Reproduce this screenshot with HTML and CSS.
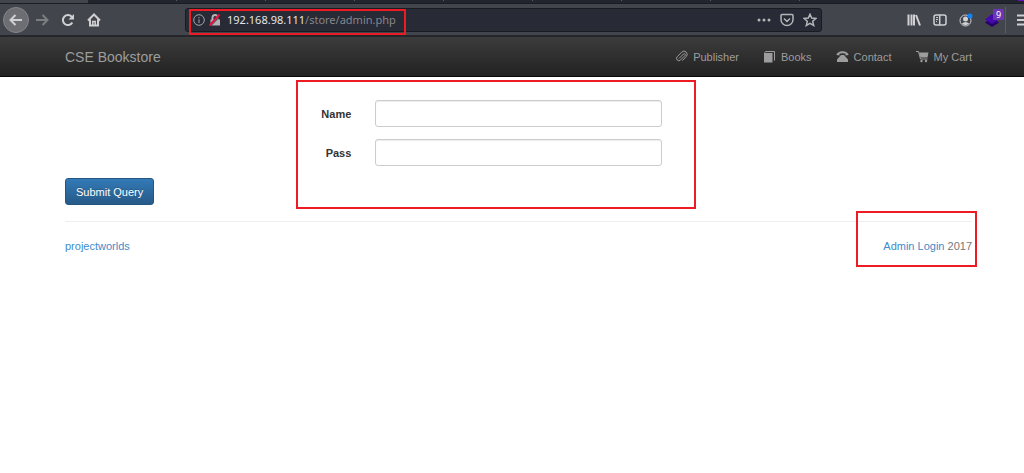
FILE: index.html
```html
<!DOCTYPE html>
<html lang="en">
    <head>
        <meta charset="UTF-8" />
        <meta name="viewport" content="width=device-width, initial-scale=1.0" />
        <title>CSE Bookstore</title>
        <link rel="stylesheet" href="styles.css">
    </head>
    <body>
        <!-- Browser chrome -->
        <div class="tab-strip">
            <div class="tab-active"></div>
            <div class="tab"></div>
            <div class="tab"></div>
            <div class="tab"></div>
            <div class="tab"></div>
            <div class="tab"></div>
            <div class="tab"></div>
            <div class="tab"></div>
            <div class="tab"></div>
            <div class="tab-account"></div>
        </div>
        <div class="toolbar">
            <div class="nav-buttons">
                <button type="button" class="tool back" aria-label="Back">
                    <svg width="14" height="14" viewBox="0 0 14 14"><path d="M13 7H2M6.500 2L1.500 7l5 5" /></svg>
                </button>
                <button type="button" class="tool forward" aria-label="Forward">
                    <svg width="14" height="14" viewBox="0 0 14 14"><path d="M1 7h11M7.500 2l5 5-5 5" /></svg>
                </button>
                <button type="button" class="tool" aria-label="Reload">
                    <svg width="14" height="14" viewBox="0 0 14 14"><path d="M11.300 9.500A5 5 0 1 1 11 4.200" /><path class="solid" d="M13 1v5.500H7.500z" /></svg>
                </button>
                <button type="button" class="tool" aria-label="Home">
                    <svg width="14" height="14" viewBox="0 0 14 14"><path d="M1 7.500L7 1.500l6 6M3 6.500V12.500h8V6.500" /><path class="frame" d="M5.800 12V8.500h2.400V12" /></svg>
                </button>
            </div>
            <div class="url-bar">
                <svg class="url-info" width="12" height="12" viewBox="0 0 12 12"><circle cx="6" cy="6" r="5.300" /><path d="M6 5.300V9M6 3v1.200" /></svg>
                <svg class="url-lock" width="12" height="12" viewBox="0 0 12 12"><path class="shackle" d="M3.500 6V3.500a2.500 2.500 0 0 1 5 0V6" /><path class="lock-body" d="M1.500 5.500h9.500v6H1.500z" /><path class="slash-gap" d="M1.500 12L12 1.500" /><path class="slash" d="M.5 11.500L10.500.5" /></svg>
                <span class="url"><span class="host">192.168.98.111</span>/store/admin.php</span>
                <svg class="url-action" width="14" height="14" viewBox="0 0 14 14"><g class="solid"><circle cx="2" cy="7" r="1.500" /><circle cx="7" cy="7" r="1.500" /><circle cx="12" cy="7" r="1.500" /></g></svg>
                <svg class="url-action" width="14" height="14" viewBox="0 0 14 14"><path d="M2 1.500h10a1 1 0 0 1 1 1V6.500a6 6 0 0 1-12 0V2.500a1 1 0 0 1 1-1zM4 5.500l3 3 3-3" /></svg>
                <svg class="url-action" width="14" height="14" viewBox="0 0 14 14"><path d="M7 1.200l1.700 3.900 4.200.4-3.200 2.800 1 4.200L7 10.300l-3.700 2.200 1-4.200L1.100 5.500l4.200-.4z" /></svg>
                <div class="mark mark-url"></div>
            </div>
            <div class="extensions">
                <button type="button" class="tool" aria-label="Library">
                    <svg width="14" height="14" viewBox="0 0 14 14"><path d="M1.500 1.500v11M4.500 1.500v11M7 1.500v11M9 2l4 10.500" /></svg>
                </button>
                <button type="button" class="tool" aria-label="Sidebars">
                    <svg width="14" height="14" viewBox="0 0 14 14"><rect class="frame" x="1" y="2" width="12" height="10" rx="2" /><path class="frame" d="M6.700 2v10" /><path class="thin" d="M3 4.500h2M3 6.500h2M3 8.500h1" /></svg>
                </button>
                <button type="button" class="tool" aria-label="Account">
                    <svg width="14" height="14" viewBox="0 0 14 14"><circle class="thin" cx="6.500" cy="7.500" r="5.500" /><circle class="solid" cx="6.500" cy="6" r="2.500" /><path class="solid" d="M2.800 10.500q3.700-3 7.400 0-3.700 3.500-7.400 0z" /><circle class="dot" cx="11" cy="3" r="2.500" /></svg>
                </button>
                <button type="button" class="tool wappalyzer" aria-label="Wappalyzer">
                    <svg width="14" height="14" viewBox="0 0 14 14"><path class="layer-low" d="M7 4.500l7 5L7 14 0 9.500z" /><path class="layer-top" d="M7 1l7 5.500L7 11 0 6.500z" /></svg>
                    <span class="badge">9</span>
                </button>
                <button type="button" class="tool menu" aria-label="Menu">
                    <svg width="14" height="14" viewBox="0 0 14 14"><path d="M1 2.500h12M1 7h12M1 11.500h12" /></svg>
                </button>
            </div>
        </div>

        <nav class="navbar">
            <a class="brand" href="#">CSE Bookstore</a>
            <ul class="nav-links">
                <li>
                    <a href="#">
                        <svg width="13" height="13" viewBox="0 0 13 13"><path class="clip" d="M4 8.500l4.500-4.500a1 1 0 0 1 1.500 1.500L5.500 10a2.200 2.200 0 0 1-3.300-3.300l4.500-4.500a3 3 0 0 1 4.600 4.300L7.500 10.500" /></svg>
                        Publisher
                    </a>
                </li>
                <li>
                    <a href="#">
                        <svg width="13" height="13" viewBox="0 0 13 13"><path d="M1 3h8.500v9.500H1z" /><path class="edge" d="M1.500 2.500L3 1.500h8.500v9" /></svg>
                        Books
                    </a>
                </li>
                <li>
                    <a href="#">
                        <svg width="13" height="13" viewBox="0 0 13 13"><path d="M.5 5C.5 3 3 1.200 6.500 1.200S12.500 3 12.500 5L9.500 5.500V3.700Q6.500 3 3.500 3.700v1.800zM5 5h3l4 4.500v2.500H1V9.500z" /></svg>
                        Contact
                    </a>
                </li>
                <li>
                    <a href="#">
                        <svg width="13" height="13" viewBox="0 0 13 13"><path d="M3 2.500h9.500L11.500 7.500H4.500z" /><path class="edge" d="M0 1.500h2.500L4.500 9h7" /><circle cx="5.500" cy="11" r="1.200" /><circle cx="10" cy="11" r="1.200" /></svg>
                        My Cart
                    </a>
                </li>
            </ul>
        </nav>

        <main class="container">
            <form class="login-form">
                <div class="form-group">
                    <label for="name">Name</label>
                    <input type="text" id="name" name="name" />
                </div>
                <div class="form-group">
                    <label for="pass">Pass</label>
                    <input type="password" id="pass" name="pass" />
                </div>
                <button type="submit" class="btn-primary">Submit Query</button>
                <div class="mark mark-form"></div>
            </form>
            <footer class="footer">
                <a href="#">projectworlds</a>
                <div class="admin">
                    <a href="#">Admin Login</a> 2017
                    <div class="mark mark-admin"></div>
                </div>
            </footer>
        </main>
    </body>
</html>
```
FILE: styles.css
```css
* {
    box-sizing: border-box;
}
body {
    min-height: 100vh;
    margin: 0;
    background: #fff;
    color: #333;
    font-family: "Liberation Sans", Arial, sans-serif;
    font-size: 11px;
    line-height: 16px;
}
a {
    color: #428bca;
    text-decoration: none;
}
svg {
    display: block;
    flex: none;
}

/* Browser chrome */
.tab-strip {
    display: flex;
    height: 4px;
    background: #23252e;
    border-bottom: 1px solid #1b1d24;
    overflow: hidden;
}
.tab-active {
    flex: none;
    width: 88px;
    height: 4px;
    background: #42454c;
}
.tab {
    flex: none;
    width: 89px;
    height: 1px;
    border-right: 1px solid #555860;
}
.tab-account {
    flex: none;
    width: 8px;
    height: 1px;
    margin-left: 218px;
    background: #6a11b8;
}
.toolbar {
    display: flex;
    align-items: center;
    height: 33px;
    background: #42454c;
    border-bottom: 2px solid #24262b;
    overflow: hidden;
}
.nav-buttons {
    display: flex;
    flex: none;
    width: 185px;
    padding-left: 3px;
}
.tool {
    display: flex;
    align-items: center;
    justify-content: center;
    flex: none;
    width: 26px;
    height: 26px;
    padding: 0;
    border: 0;
    background: none;
    color: #d0d0d2;
}
.tool svg,
.url-action {
    fill: none;
    stroke: currentColor;
    stroke-width: 2;
}
.tool .solid,
.url-action .solid {
    fill: currentColor;
    stroke: none;
}
.tool .frame {
    stroke-width: 1.5;
}
.tool .thin {
    stroke-width: 1;
}
.back {
    border: 1px solid #858689;
    border-radius: 50%;
    background: #6c6e73;
}
.forward {
    color: #7b7d81;
}
.url-bar {
    position: relative;
    display: flex;
    align-items: center;
    flex: 1;
    gap: 8px;
    height: 24px;
    padding: 0 4px 0 7px;
    border: 1px solid #191b22;
    border-radius: 3px;
    background: #282a35;
}
.url-info {
    fill: none;
    stroke: #a5a6aa;
}
.url-lock {
    margin-left: -4px;
    fill: none;
}
.shackle {
    stroke: #b2b3b6;
    stroke-width: 2;
}
.lock-body {
    fill: #b2b3b6;
}
.slash-gap {
    stroke: #282a35;
}
.slash {
    stroke: #e2123f;
    stroke-width: 2;
}
.url {
    flex: 1;
    margin-left: -2px;
    color: #85868b;
    font-family: "Noto Sans", sans-serif;
}
.host {
    color: #e6e6e8;
}
.url-action {
    margin-left: 1px;
    color: #b4b5b9;
    stroke-width: 1.5;
}
.extensions {
    display: flex;
    flex: none;
    width: 202px;
    padding-left: 79px;
}
.dot {
    fill: #0a84ff;
    stroke: none;
}
.wappalyzer {
    position: relative;
}
.wappalyzer svg {
    stroke: none;
}
.layer-low {
    fill: #25006b;
}
.layer-top {
    fill: #4608ad;
}
.badge {
    position: absolute;
    top: 2px;
    right: 1px;
    width: 11px;
    height: 11px;
    border-radius: 1px;
    background: #6b35b5;
    color: #fff;
    font: 9px/11px "Noto Sans", sans-serif;
    text-align: center;
}
.menu {
    border-left: 1px solid #5b5d63;
    padding-left: 8px;
}

/* Site header */
.navbar {
    display: flex;
    align-items: center;
    justify-content: space-between;
    height: 40px;
    padding: 0 52px 0 65px;
    background: linear-gradient(#3c3c3c, #222);
    border-bottom: 1px solid #080808;
}
.navbar a {
    color: #9d9d9d;
}
.brand {
    font-size: 14px;
}
.nav-links {
    display: flex;
    gap: 24px;
    margin: 0;
    padding: 0;
    list-style: none;
}
.nav-links a {
    display: flex;
    align-items: center;
    gap: 5px;
}
.nav-links svg {
    fill: currentColor;
}
.nav-links .clip,
.nav-links .edge {
    fill: none;
    stroke: currentColor;
}

/* Login page */
.container {
    padding: 23px 52px 0 65px;
}
.login-form {
    position: relative;
    padding-bottom: 16px;
    border-bottom: 1px solid #eee;
}
.form-group {
    display: grid;
    grid-template-columns: repeat(3, 1fr);
    align-items: center;
    gap: 24px;
    margin-bottom: 12px;
}
.form-group label {
    font-weight: bold;
    text-align: right;
}
.form-group input {
    width: 100%;
    height: 27px;
    padding: 4px 10px;
    border: 1px solid #ccc;
    border-radius: 3px;
    background: #fff;
    box-shadow: inset 0 1px 1px rgba(0, 0, 0, 0.075);
    font: inherit;
}
.btn-primary {
    display: block;
    height: 27px;
    padding: 0 10px;
    border: 1px solid #245580;
    border-radius: 3px;
    background: linear-gradient(#337ab7, #265a88);
    color: #fff;
    font: inherit;
    text-shadow: 0 -1px 0 rgba(0, 0, 0, 0.2);
}
.footer {
    display: flex;
    justify-content: space-between;
    padding-top: 16px;
}
.admin {
    position: relative;
    color: #777;
}

/* Highlight boxes */
.mark {
    position: absolute;
    border: 2px solid #ed1c24;
    pointer-events: none;
}
.mark-url {
    top: 0;
    left: 3px;
    width: 217px;
    height: 26px;
}
.mark-form {
    top: -20px;
    left: 231px;
    right: 276px;
    height: 129px;
}
.mark-admin {
    top: -27px;
    left: -27px;
    right: -5px;
    height: 56px;
}
```
